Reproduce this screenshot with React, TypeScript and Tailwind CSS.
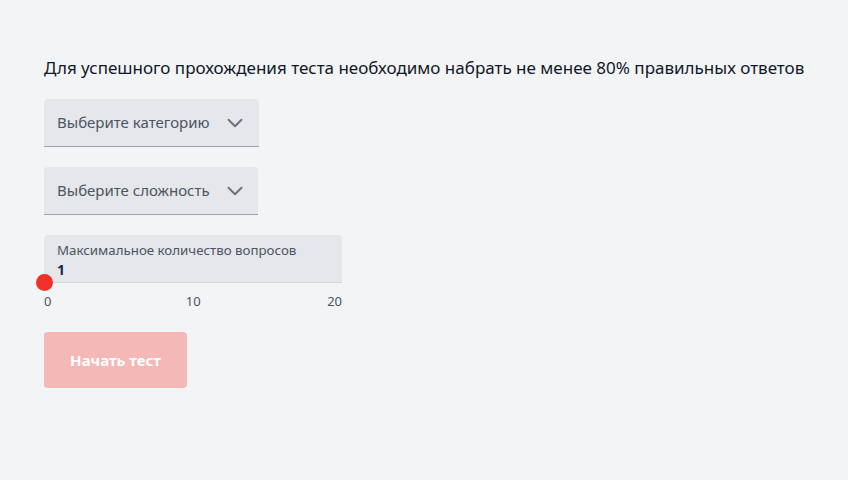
import { ChevronDown } from "lucide-react";

export default function App() {
  return (
    <div className="min-h-[480px] w-full bg-[#f3f4f6] px-[44px] pt-[56px] font-['Noto_Sans',sans-serif] text-[#111827]">
      <p className="whitespace-nowrap text-[17px] leading-[24px]">
        Для успешного прохождения теста необходимо набрать не менее 80% правильных ответов
      </p>

      <div className="mt-[19px] flex flex-col gap-[20px]">
        <div className="flex h-[48px] w-[215px] items-center justify-between rounded-t-[4px] border-b border-[#9ca3af] bg-[#e5e7eb] pl-[13px] pr-[11px] text-[15px] text-[#4b5563]">
          <span>Выберите категорию</span>
          <ChevronDown className="h-[26px] w-[26px] text-[#6b7280]" strokeWidth={1.8} />
        </div>
        <div className="flex h-[48px] w-[214px] items-center justify-between rounded-t-[4px] border-b border-[#9ca3af] bg-[#e5e7eb] pl-[13px] pr-[10px] text-[15px] text-[#4b5563]">
          <span>Выберите сложность</span>
          <ChevronDown className="h-[26px] w-[26px] text-[#6b7280]" strokeWidth={1.8} />
        </div>
      </div>

      <div className="mt-[20px] w-[298px]">
        <div className="relative h-[48px] rounded-t-[4px] border-b border-[#d1d5db] bg-[#e5e7eb] pl-[13px] pt-[6px]">
          <div className="text-[13.3px] leading-[18px] text-[#4b5563]">Максимальное количество вопросов</div>
          <div className="text-[14px] font-bold leading-[22px] text-[#1f2937]">1</div>
          <span className="absolute bottom-[-9px] left-[-8px] h-[17px] w-[17px] rounded-full bg-[#ef3129]" />
        </div>
        <div className="mt-[9px] flex justify-between text-[13px] leading-[18px] text-[#4b5563]">
          <span>0</span>
          <span className="ml-[8px]">10</span>
          <span>20</span>
        </div>
      </div>

      <button className="mt-[22px] flex h-[56px] w-[143px] items-center justify-center rounded-[4px] bg-[#f4b8b6] text-[15px] font-bold text-white">
        Начать тест
      </button>
    </div>
  );
}
